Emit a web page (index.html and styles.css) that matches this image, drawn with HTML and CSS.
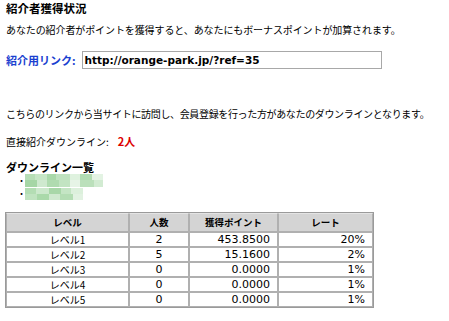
FILE: index.html
```html
<!DOCTYPE html>
<html lang="ja">
<head>
<meta charset="utf-8">
<link rel="stylesheet" href="styles.css">
</head>
<body>
<div class="page">
  <h1 class="title">紹介者獲得状況</h1>
  <p class="intro">あなたの紹介者がポイントを獲得すると、あなたにもボーナスポイントが加算されます。</p>
  <div class="link-row">
    <span class="link-label">紹介用リンク:</span>
    <div class="link-box">http://orange-park.jp/?ref=35</div>
  </div>
  <p class="desc">こちらのリンクから当サイトに訪問し、会員登録を行った方があなたのダウンラインとなります。</p>
  <p class="direct">直接紹介ダウンライン:<span class="count">2人</span></p>
  <h2 class="sub">ダウンライン一覧</h2>
  <ul class="names">
    <li><svg class="blur" width="78" height="13" viewBox="0 0 78 13">
      <rect x="0" y="0" width="78" height="13" fill="#d9efd9"/>
      <rect x="0" y="0" width="10" height="6" fill="#b6deb6"/>
      <rect x="10" y="0" width="12" height="6" fill="#c6e6c6"/>
      <rect x="22" y="0" width="9" height="6" fill="#a9d8a9"/>
      <rect x="31" y="0" width="14" height="6" fill="#bfe2bf"/>
      <rect x="45" y="0" width="10" height="6" fill="#dff2df"/>
      <rect x="55" y="0" width="12" height="6" fill="#b2dcb2"/>
      <rect x="67" y="0" width="11" height="6" fill="#e3f3e3"/>
      <rect x="0" y="6" width="12" height="7" fill="#a6d6a6"/>
      <rect x="12" y="6" width="10" height="7" fill="#cfe9cf"/>
      <rect x="22" y="6" width="12" height="7" fill="#b0dbb0"/>
      <rect x="34" y="6" width="11" height="7" fill="#c2e4c2"/>
      <rect x="45" y="6" width="10" height="7" fill="#e6f4e6"/>
      <rect x="55" y="6" width="14" height="7" fill="#bbe0bb"/>
      <rect x="69" y="6" width="9" height="7" fill="#d2ebd2"/>
    </svg></li>
    <li><svg class="blur" width="58" height="12" viewBox="0 0 58 12">
      <rect x="0" y="0" width="58" height="12" fill="#d6edd6"/>
      <rect x="0" y="0" width="11" height="6" fill="#b3ddb3"/>
      <rect x="11" y="0" width="13" height="6" fill="#cce8cc"/>
      <rect x="24" y="0" width="12" height="6" fill="#a8d7a8"/>
      <rect x="36" y="0" width="10" height="6" fill="#c4e5c4"/>
      <rect x="46" y="0" width="12" height="6" fill="#dcf0dc"/>
      <rect x="0" y="6" width="12" height="6" fill="#c0e3c0"/>
      <rect x="12" y="6" width="12" height="6" fill="#aad9aa"/>
      <rect x="24" y="6" width="11" height="6" fill="#cfe9cf"/>
      <rect x="35" y="6" width="13" height="6" fill="#b4ddb4"/>
      <rect x="48" y="6" width="10" height="6" fill="#e2f2e2"/>
    </svg></li>
  </ul>
  <table class="levels">
    <colgroup>
      <col class="c1"><col class="c2"><col class="c3"><col class="c4">
    </colgroup>
    <thead>
      <tr><th>レベル</th><th>人数</th><th>獲得ポイント</th><th>レート</th></tr>
    </thead>
    <tbody>
      <tr><td class="center">レベル1</td><td class="center num">2</td><td class="right num">453.8500</td><td class="right num">20%</td></tr>
      <tr><td class="center">レベル2</td><td class="center num">5</td><td class="right num">15.1600</td><td class="right num">2%</td></tr>
      <tr><td class="center">レベル3</td><td class="center num">0</td><td class="right num">0.0000</td><td class="right num">1%</td></tr>
      <tr><td class="center">レベル4</td><td class="center num">0</td><td class="right num">0.0000</td><td class="right num">1%</td></tr>
      <tr><td class="center">レベル5</td><td class="center num">0</td><td class="right num">0.0000</td><td class="right num">1%</td></tr>
    </tbody>
  </table>
</div>
</body>
</html>
```
FILE: styles.css
```css
html, body {
  margin: 0;
  padding: 0;
  background: #ffffff;
}
.page {
  padding: 0 6px;
  font-family: "Noto Sans CJK JP", "DejaVu Sans", sans-serif;
  font-size: 10px;
  color: #000;
}
.title {
  margin: 0;
  font-size: 11.5px;
  font-weight: bold;
  line-height: 16px;
}
.intro {
  margin: 7px 0 0;
  line-height: 14px;
  letter-spacing: -0.1px;
  white-space: nowrap;
}
.link-row {
  display: flex;
  align-items: center;
  gap: 6px;
  margin-top: 14px;
  height: 18px;
}
.link-label {
  color: #1a3fd0;
  font-weight: bold;
  font-size: 11px;
}
.link-box {
  box-sizing: border-box;
  width: 300px;
  height: 18px;
  border: 1px solid #a8a8a8;
  padding: 0 2px;
  font-family: "DejaVu Sans", sans-serif;
  font-weight: bold;
  font-size: 10.5px;
  line-height: 16px;
}
.desc {
  margin: 38px 0 0;
  line-height: 14px;
  letter-spacing: -0.35px;
  white-space: nowrap;
}
.direct {
  margin: 13px 0 0;
  line-height: 14px;
}
.count {
  color: #dd0000;
  font-weight: bold;
  font-size: 11px;
  margin-left: 9px;
}
.sub {
  margin: 11px 0 0;
  font-size: 11px;
  font-weight: bold;
  line-height: 14px;
}
.names {
  margin: 0;
  padding: 0 0 0 11px;
  list-style: none;
}
.names li {
  display: flex;
  align-items: center;
  height: 13px;
}
.names li::before {
  content: "・";
  width: 8px;
  font-size: 9px;
}
.blur {
  display: block;
}
.levels {
  margin: 12px 0 0 -1px;
  width: 367px;
  table-layout: fixed;
  border-collapse: separate;
  border-spacing: 0;
  border: 1px solid #9a9a9a;
}
.c1 { width: 123px; }
.c2 { width: 60px; }
.c3 { width: 89px; }
.c4 { width: 95px; }
.levels th, .levels td {
  border: 1px solid #b0b0b0;
  padding: 0 7px;
}
.levels th {
  background: #d4d4d4;
  height: 17px;
  line-height: 17px;
  font-size: 9.5px;
  font-weight: bold;
  text-align: center;
  border-top-color: #e4e4e4;
}
.levels td {
  height: 13px;
  line-height: 13px;
  font-size: 10px;
  vertical-align: middle;
}
.levels td.num {
  font-family: "DejaVu Sans", sans-serif;
  font-size: 11px;
  line-height: 13px;
}
.center { text-align: center; }
.right { text-align: right; }
```
